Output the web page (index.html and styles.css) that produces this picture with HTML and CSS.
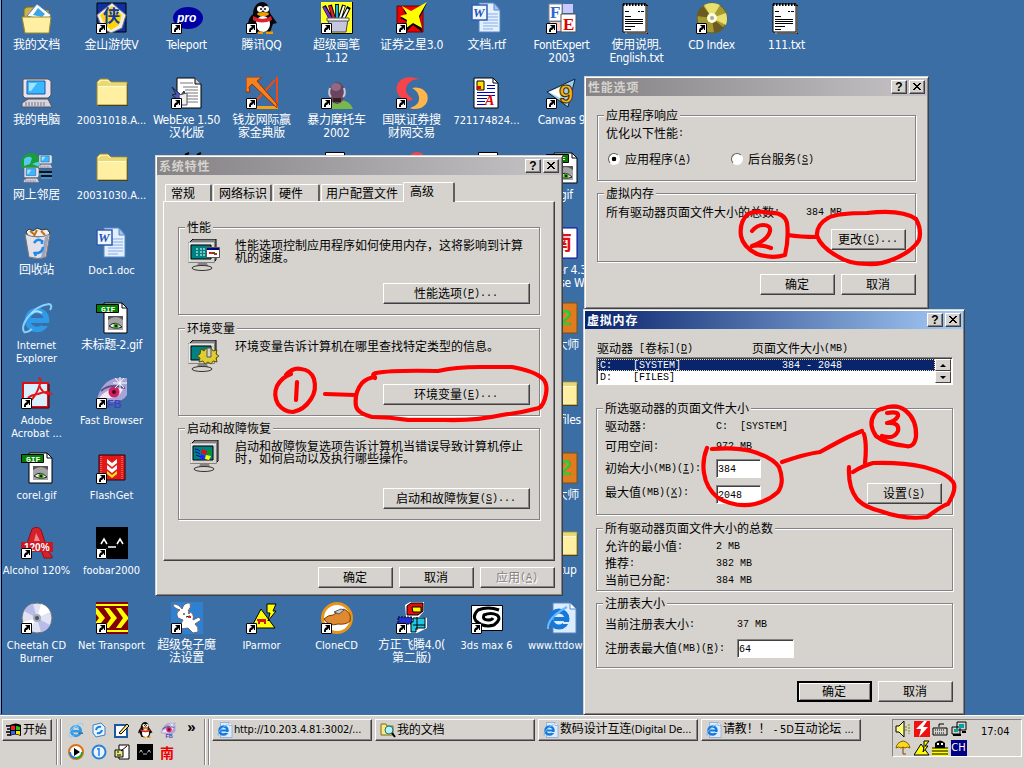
FILE: index.html
```
<!DOCTYPE html>
<html lang="zh-CN">
<head>
    <meta charset="UTF-8">
    <title>系统特性</title>
    <link rel="stylesheet" href="styles.css">
</head>
<body>

    <svg class="defs">
        <defs>
            <symbol id="arrow" viewBox="0 0 11 11">
                <path d="M0 0h11v11H0z" fill="#fff"/><path d="M.5 .5h10v10H.5z" fill="none" stroke="#000"/>
                <path d="M4 2h5v5H8V5L6 7H5v2H3V7l1-2 2-1z" fill="#000"/>
            </symbol>
            <symbol id="folder" viewBox="0 0 32 32">
                <path d="M1 28V5l3-3h8l3 3h16v23z" fill="#ffefa0" stroke="#9c8a31"/>
                <path d="M2 9h28V6H14l-2-2H5L2 7z" fill="#e8d878"/><path d="M2 9.500h28" stroke="#fffbd8"/>
                <path d="M2 28.500h30V7" fill="none" stroke="#4a4118"/>
            </symbol>
            <symbol id="word" viewBox="0 0 32 32">
                <path d="M8 1h15l6 7v22H8z" fill="#e4efff" stroke="#5a86c4"/><path d="M23 1v7h6z" fill="#a5c5f0" stroke="#5a86c4"/>
                <path d="M12 12h15M12 15h15M12 18h15M12 21h15M12 24h15M12 27h10" stroke="#86aee6"/>
                <path d="M1 3h15v15H1z" fill="#f0f6ff" stroke="#2e5cb0" stroke-width="1.500"/>
                <text x="2" y="15" class="serif" font-size="13" font-style="italic" fill="#2456b0">W</text>
            </symbol>
            <symbol id="gif" viewBox="0 0 32 32">
                <path d="M8 1h18l5 5v25H8z" fill="#fff" stroke="#000"/><path d="M26 1v5h5" fill="none" stroke="#000"/>
                <path d="M12 14h15v14H12z" fill="#a5a5a5"/><path d="M12 18q8-6 15 0v-4H12z" fill="#555"/>
                <path d="M13 24q6-6 13 1q-7 3-13-1z" fill="#eee" stroke="#222"/><circle cx="20" cy="24" r="2.500" fill="#3a9a1a"/><circle cx="20" cy="24" r="1" fill="#000"/>
                <path d="M.5 2.500h22v8H.5z" fill="#008200" stroke="#000"/><text x="5" y="9.500" class="mono" font-size="8" fill="#fff">GIF</text>
            </symbol>
            <symbol id="ie" viewBox="0 0 32 32">
                <circle cx="16" cy="18" r="9.500" fill="none" stroke="#2f9be8" stroke-width="5.500"/>
                <path d="M9 16h17v5H9z" fill="#2f9be8"/><path d="M20 21h10v3h-9z" fill="#3b6ea5"/>
                <path d="M3 30C-1 22 12 4 28 2q4 1 1 6M3 30q4 1 8-3" fill="none" stroke="#86d0ff" stroke-width="2"/>
                <path d="M10 12q5-5 11-1" fill="none" stroke="#a8e0ff" stroke-width="2"/>
            </symbol>
            <symbol id="note" viewBox="0 0 32 32">
                <path d="M6 3h21v29H6z" fill="#000"/><path d="M2 2h23v28H2z" fill="#fff" stroke="#000"/><path d="M26 4v27H4" fill="none" stroke="#bbb"/>
                <path d="M2 2.500h24" stroke="#000" stroke-width="3" stroke-dasharray="1.500 1.500"/>
                <path d="M4 9.500h4M17 9.500h2M20 9.500h3M4 14.500h6M4 17.500h18M4 19.500h18M4 21.500h18M4 24.500h10M4 27.500h6" stroke="#000"/>
            </symbol>
            <symbol id="orange" viewBox="0 0 32 32">
                <path d="M1 1h30v30H1z" fill="#e07b20" stroke="#7a5010"/><text x="13" y="23" font-size="22" class="sans" fill="#31c941">2</text>
            </symbol>
            <symbol id="screen" viewBox="0 0 32 32">
                <path d="M2 3l3-3h23v21l-3 3z" fill="#848284" stroke="#000"/>
                <path d="M.5 3.500h26v20H.5z" fill="#d6d3ce" stroke="#848284"/><path d="M1 23V4h25" fill="none" stroke="#fff"/>
                <path d="M3 6h20v14H3z" fill="#008284" stroke="#000"/>
                <path d="M10 24h9l1 3h-11z" fill="#848284"/><ellipse cx="14" cy="29" rx="10" ry="2.500" fill="#d6d3ce" stroke="#333"/>
            </symbol>
            <symbol id="pc" viewBox="0 0 32 32">
                <path d="M2 2h25l3 2v14l-3 3H4l-2-2z" fill="#e7e3ef" stroke="#555"/><path d="M6 4h18v13H6z" fill="#3ab7ff" stroke="#1b5aa0"/>
                <path d="M8 6h8l-6 8H8z" fill="#a0e4ff"/><path d="M7 22h20l4 8H1v-4z" fill="#d6d3e4" stroke="#555"/><path d="M4 26h21M4 28h20" stroke="#777" stroke-dasharray="2 1"/>
            </symbol>
            <symbol id="qq" viewBox="0 0 32 32">
                <path d="M11 2q5-4 10 0 3 4 3 9l7 10-4 1-3 8H9l-4-9-3 2q0-7 5-11 0-6 4-10z" fill="#080808"/>
                <ellipse cx="17" cy="22" rx="7" ry="8" fill="#fff"/><circle cx="14" cy="7" r="3" fill="#fff"/><circle cx="20" cy="7" r="3" fill="#fff"/><circle cx="15" cy="7" r="1"/><circle cx="19" cy="7" r="1"/>
                <ellipse cx="17" cy="12" rx="6" ry="2" fill="#ef9c00"/><path d="M7 14q10 6 18 0l1 4q-10 5-19 0z" fill="#e0202a"/><path d="M12 31h5M20 31h7" stroke="#ef9c00" stroke-width="3"/>
            </symbol>
            <symbol id="foobar" viewBox="0 0 32 32">
                <path d="M0 0h32v32H0z"/><path d="M5 17l3-5 3 5M21 17l3-5 3 5M12 20h8" fill="none" stroke="#fff" stroke-width="1.500"/>
            </symbol>
            <symbol id="fb" viewBox="0 0 32 32">
                <path d="M1 22Q6 4 20 1h11v17q-4 7-15 7z" fill="#a9a4d8"/><path d="M3 21q8-11 24-9-4 10-14 9z" fill="#f4e5f0"/>
                <circle cx="18" cy="15" r="5.500" fill="#d02060"/><circle cx="18" cy="15" r="2" fill="#401020"/><path d="M5 14Q14 6 29 11" fill="none" stroke="#605080" stroke-width="2"/>
                <path d="M24 0v13M17 6h14M19 1l9 10M28 1l-9 10" stroke="#fff"/><text x="11" y="31" font-size="11" class="sans" fill="#4242c0">FB</text>
            </symbol>
            <symbol id="page-ie" viewBox="0 0 32 32">
                <path d="M7 1h17l6 6v24H7z" fill="#dcecff" stroke="#5a86c4"/><path d="M24 1v6h6" fill="#fff" stroke="#5a86c4"/>
                <circle cx="13" cy="17" r="8" fill="none" stroke="#1878d8" stroke-width="5"/><path d="M8 15h14v4H8z" fill="#1878d8"/><path d="M17 20h8v2h-8z" fill="#dcecff"/>
                <path d="M2 27Q1 16 21 5" fill="none" stroke="#68b8ff" stroke-width="2"/>
            </symbol>
            <symbol id="flag" viewBox="0 0 16 14">
                <path d="M0 3h4M1 6h3M0 9h4M1 12h3" stroke="#000" stroke-width="1.500"/><path d="M4 2q6-3 11 0v11q-6-3-11 0z" fill="#000"/>
                <path d="M5 3q2-1 4 0v4H5z" fill="#f02020"/><path d="M10 3q2 0 4 1v3h-4z" fill="#20c020"/><path d="M5 8h4v3q-2 0-4 1z" fill="#3060ff"/><path d="M10 8h4v4q-2-1-4-1z" fill="#ffe000"/>
            </symbol>
        </defs>
    </svg>

    <div class="desktop">
        <div class="item c1 r1">
            <svg viewBox="0 0 32 32"><path d="M3 30V7l3-2h8l3 3h11v22z" fill="#c9b34a" stroke="#7a6a18"/><path d="M6 14L16 2l14 11-4 6z" fill="#fff" stroke="#5580bb"/><path d="M12 13l5-7 7 6-3 3z" fill="#38a5e8"/><path d="M1 15h29l-2 16H4z" fill="#ffefa0" stroke="#9c8a31"/></svg>
            <span>我的文档</span>
        </div>
        <div class="item c2 r1">
            <svg viewBox="0 0 32 32"><path d="M1 1h29v29H1z" fill="#1030a0" stroke="#000"/><path d="M16 1l14 12-4 13-11 5-9-5L1 13z" fill="#eee" stroke="#777"/><path d="M16 4l10 9-3 10-8 5-6-5-5-10z" fill="#ffd700"/><text x="7" y="20" font-size="17" class="cjk" fill="#1038b0">侠</text><use href="#arrow" x="0" y="21" width="11" height="11"/></svg>
            <span>金山游侠V</span>
        </div>
        <div class="item c3 r1">
            <svg viewBox="0 0 32 32"><ellipse cx="17" cy="16" rx="15" ry="11" fill="#0000a5"/><text x="6" y="20" font-size="12" class="sans" font-style="italic" fill="#fff">pro</text><use href="#arrow" x="0" y="21" width="11" height="11"/></svg>
            <span>Teleport</span>
        </div>
        <div class="item c4 r1">
            <svg viewBox="0 0 32 32"><use href="#qq"/><use href="#arrow" x="0" y="21" width="11" height="11"/></svg>
            <span>腾讯QQ</span>
        </div>
        <div class="item c5 r1">
            <svg viewBox="0 0 32 32"><path d="M0 0h32v32H0z" fill="#ffff21"/><path d="M0 31.500h31.500V0" fill="none" stroke="#000"/><path d="M10 17L3 4M13 17L9 3M16 16V2M19 16l4-13M22 17l6-12" stroke="#000" stroke-width="4"/><path d="M10 17L3 5" stroke="#7030d0" stroke-width="2.500"/><path d="M13 17L9 4" stroke="#e02020" stroke-width="2.500"/><path d="M16 16V3" stroke="#20b0e0" stroke-width="2.500"/><path d="M19 16l4-12M22 17l5-10" stroke="#fff" stroke-width="2"/><path d="M7 17h20l-2 13H10z" fill="#c6c6de" stroke="#444"/><path d="M6 16h22v3H6z" fill="#eee" stroke="#555"/><use href="#arrow" x="0" y="21" width="11" height="11"/></svg>
            <span>超级画笔<br>1.12</span>
        </div>
        <div class="item c6 r1">
            <svg viewBox="0 0 32 32"><path d="M1 4h26v26H1z" fill="#ef0000" stroke="#700"/><path d="M7 7l8 5L31 1l-7 14 2 15-9-7-8 8 1-12-6-3 6-3z" fill="#000"/><path d="M6 4l9 5L31 0l-8 14 3 12-9-5-8 6 2-9-7-4 7-2z" fill="#ffff00"/><use href="#arrow" x="0" y="21" width="11" height="11"/></svg>
            <span>证券之星3.0</span>
        </div>
        <div class="item c7 r1"><svg><use href="#word"/></svg><span>文档.rtf</span></div>
        <div class="item c8 r1">
            <svg viewBox="0 0 32 32"><path d="M3 2h13v17H3z" fill="#fff" stroke="#888"/><path d="M17 2h10v9H17z" fill="#c8c8ff"/><path d="M4 20h11v9H4z" fill="#ffc8c8"/><text x="4" y="16" font-size="17" class="serif" fill="#3068d0">F</text><path d="M15 12h15v18H15z" fill="#fff" stroke="#555"/><text x="17" y="28" font-size="17" class="serif" fill="#e00000">E</text><use href="#arrow" x="0" y="21" width="11" height="11"/></svg>
            <span>FontExpert<br>2003</span>
        </div>
        <div class="item c9 r1"><svg><use href="#note"/></svg><span>使用说明.<br>English.txt</span></div>
        <div class="item c10 r1">
            <svg viewBox="0 0 32 32"><circle cx="16" cy="16" r="15" fill="#a59a31" stroke="#6b6318"/><path d="M16 16L8 3q8-4 16 0zM16 16l14 7q2-6 0-12z" fill="#e8e070"/><path d="M16 16L1 14q0-6 6-10zM16 16l2 15q7-1 10-5z" fill="#6b5a21"/><circle cx="16" cy="16" r="5" fill="#ffffd8"/><circle cx="16" cy="16" r="2" fill="#aaa"/><use href="#arrow" x="0" y="21" width="11" height="11"/></svg>
            <span>CD Index</span>
        </div>
        <div class="item c11 r1"><svg><use href="#note"/></svg><span>111.txt</span></div>

        <div class="item c1 r2"><svg><use href="#pc"/></svg><span>我的电脑</span></div>
        <div class="item c2 r2"><svg><use href="#folder"/></svg><span class="latin">20031018.A...</span></div>
        <div class="item c3 r2">
            <svg viewBox="0 0 32 32"><path d="M6 1h18l6 6v24H6z" fill="#fff" stroke="#000"/><path d="M24 1v6h6" fill="#ccc" stroke="#000"/><path d="M9 6h13M12 10h15M14 13h13M16 16h11M16 19h11M16 22h11M16 25h11" stroke="#777"/><path d="M1 10l9 8 3-4 2 7-8 2-6-5 4-1z" fill="#4a55c0" stroke="#223"/><path d="M8 18l8-2v12H9z" fill="#eee" stroke="#555"/><use href="#arrow" x="0" y="21" width="11" height="11"/></svg>
            <span>WebExe 1.50<br>汉化版</span>
        </div>
        <div class="item c4 r2">
            <svg viewBox="0 0 32 32"><path d="M31 0v32M29 3L10 24" fill="none" stroke="#ef4a10" stroke-width="2"/><path d="M8 30.500h24" stroke="#f9a010" stroke-width="3"/><path d="M0 0h16l-5 4 20 23v4L6 7l-3 3 1 5H0z" fill="#f58220" stroke="#9c3000"/><use href="#arrow" x="0" y="21" width="11" height="11"/></svg>
            <span>钱龙网际赢<br>家金典版</span>
        </div>
        <div class="item c5 r2">
            <svg viewBox="0 0 32 32"><path d="M8 32q2-9 10-9 11 0 14 9z" fill="#78b848"/><ellipse cx="16" cy="16" rx="8" ry="11" fill="#6a4460"/><ellipse cx="15" cy="10" rx="5" ry="4" fill="#8f6a80"/><path d="M9 11q-2 6 1 9M23 11q2 6-1 9" fill="none" stroke="#c8c8d8" stroke-width="2"/><path d="M12 21h8v4h-8z" fill="#322"/><use href="#arrow" x="0" y="21" width="11" height="11"/></svg>
            <span>暴力摩托车<br>2002</span>
        </div>
        <div class="item c6 r2">
            <svg viewBox="0 0 32 32"><path d="M24 2Q8-3 2 6q-5 10 6 17 8 2 9-1Q6 15 12 7q4-5 12-5z" fill="#f7434a"/><path d="M16 11q10-2 15 6 3 9-6 14-8 2-11 0 10-3 9-11-1-6-7-9z" fill="#ffb54a"/><use href="#arrow" x="0" y="21" width="11" height="11"/></svg>
            <span>国联证券搜<br>财网交易</span>
        </div>
        <div class="item c7 r2">
            <svg viewBox="0 0 32 32"><path d="M3 1h19l5 5v25H3z" fill="#fff" stroke="#000"/><path d="M22 1v5h5" fill="none" stroke="#000"/><path d="M6 4h7v9H6z" fill="#ffe000" stroke="#000"/><path d="M6 9h4v3H6z" fill="#d00"/><path d="M16 8.500h8M16 11.500h8M6 15.500h18M6 18.500h18M6 21.500h10M6 24.500h8M6 27.500h8" stroke="#0000c0"/><text x="14" y="28" font-size="14" class="serif" font-style="italic" fill="#e00000">A</text></svg>
            <span class="latin">721174824...</span>
        </div>
        <div class="item c8 r2">
            <svg viewBox="0 0 32 32"><path d="M1 15L29 2l-7 28z" fill="#9fd0f0" stroke="#123"/><path d="M3 15l14-6-3 12z" fill="#fff"/><text x="13" y="26" font-size="26" class="sans" fill="#f0b020" stroke="#402800">9</text><use href="#arrow" x="0" y="21" width="11" height="11"/></svg>
            <span>Canvas 9</span>
        </div>

        <div class="item c1 r3">
            <svg viewBox="0 0 32 32"><circle cx="10" cy="11" r="10" fill="#18a038"/><path d="M3 7q4-4 8-1l-2 6-6 2zM11 12l8-3v6z" fill="#58c8f0"/><use href="#pc" x="17" y="1" width="15" height="17"/><path d="M18 20h13M20 24h11" stroke="#111" stroke-width="2"/><path d="M18 22h13M20 26h11" stroke="#48b0e8"/><use href="#pc" x="2" y="14" width="17" height="18"/></svg>
            <span>网上邻居</span>
        </div>
        <div class="item c2 r3"><svg><use href="#folder"/></svg><span class="latin">20031030.A...</span></div>
        <div class="item c3 r3"><svg viewBox="0 0 32 32"><path d="M14 3l4-2M26 3l4-2" stroke="#000" stroke-width="2"/></svg></div>
        <div class="item c5 r3"><svg viewBox="0 0 32 32"><path d="M4.500 .500h19V30h-19z" fill="#fff" stroke="#000"/></svg></div>
        <div class="item c6 r3"><svg viewBox="0 0 32 32"><path d="M15 2q6-4 12 0v3H15z" fill="#f7434a"/></svg></div>
        <div class="item c7 r3"><svg viewBox="0 0 32 32"><path d="M7.500 .500h19V30h-19z" fill="#fff" stroke="#000"/></svg></div>
        <div class="item c8 r3"><svg><use href="#gif"/></svg><span>1.gif</span></div>

        <div class="item c1 r4">
            <svg viewBox="0 0 32 32"><path d="M5 5l3-3 4 2 4-3 5 2 5-1 3 4-3 4H8z" fill="#eee" stroke="#333"/><path d="M9 4l5 4M16 3l-3 6M20 4l4 4" stroke="#c07010" stroke-width="2"/><path d="M4 7q13 6 25 0l-4 23q-8 3-17 0z" fill="#e3e0ea" stroke="#777"/><path d="M24 10l4-2-4 22-4 1z" fill="#a5a2b5"/><path d="M13 16q4-6 9-1M21 13v4M22 20q-1 7-8 6M15 29l-2-4" fill="none" stroke="#1b8ae8" stroke-width="2.500"/></svg>
            <span>回收站</span>
        </div>
        <div class="item c2 r4"><svg><use href="#word"/></svg><span class="latin">Doc1.doc</span></div>
        <div class="item c8 r4">
            <svg viewBox="0 0 32 32"><path d="M1 1h30v30H1z" fill="#fff" stroke="#00a"/><text x="6" y="23" font-size="20" class="cjk" fill="#e01010">南</text></svg>
            <span>Maker 4.3<br>House W</span>
        </div>

        <div class="item c1 r5"><svg><use href="#ie"/></svg><span class="latin">Internet<br>Explorer</span></div>
        <div class="item c2 r5"><svg><use href="#gif"/></svg><span>未标题-2.gif</span></div>
        <div class="item c8 r5"><svg><use href="#orange"/></svg><span>大大师</span></div>

        <div class="item c1 r6">
            <svg viewBox="0 0 32 32"><path d="M2 6h25v24H2z" fill="#d8efff" stroke="#e01010" stroke-width="2"/><path d="M28 7v24H3" fill="none" stroke="#400"/><path d="M17 1q4 0 2 6Q15 20 8 25M18 8q4 10 12 9-3-4-13 0-7 1-10 4" fill="none" stroke="#e01818" stroke-width="2"/><use href="#arrow" x="0" y="21" width="11" height="11"/></svg>
            <span class="latin">Adobe<br>Acrobat ...</span>
        </div>
        <div class="item c2 r6"><svg viewBox="0 0 32 32"><use href="#fb"/><use href="#arrow" x="0" y="21" width="11" height="11"/></svg><span class="latin">Fast Browser</span></div>
        <div class="item c8 r6"><svg><use href="#folder"/></svg><span>My files</span></div>

        <div class="item c1 r7"><svg><use href="#gif"/></svg><span class="latin">corel.gif</span></div>
        <div class="item c2 r7">
            <svg viewBox="0 0 32 32"><path d="M3 3h26v25H3z" fill="#e01818" stroke="#300"/><path d="M5 4v23M26 4v23" stroke="#ff9090" stroke-dasharray="1 1"/><path d="M11 7l5 4 5-4v4l-5 4-5-4zM11 13l5 4 5-4v4l-5 4-5-4z" fill="#fff"/><path d="M11 19l5 4 5-4v3l-5 4-5-4z" fill="#ffde21"/><use href="#arrow" x="0" y="21" width="11" height="11"/></svg>
            <span class="latin">FlashGet</span>
        </div>
        <div class="item c8 r7"><svg><use href="#orange"/></svg><span>大大师</span></div>

        <div class="item c1 r8">
            <svg viewBox="0 0 32 32"><path d="M11 2q6-4 9 1l7 21 4 5v2h-8l-5-14h-4L7 28H2z" fill="#d6202a" stroke="#8c1018"/><path d="M15 6l4 8h-6z" fill="#f48a90"/><path d="M0 15h32v10H0z" fill="#c81822"/><text x="3" y="24" font-size="10" class="sans" fill="#fff">120%</text><use href="#arrow" x="0" y="21" width="11" height="11"/></svg>
            <span class="latin">Alcohol 120%</span>
        </div>
        <div class="item c2 r8"><svg viewBox="0 0 32 32"><use href="#foobar"/><use href="#arrow" x="0" y="21" width="11" height="11"/></svg><span class="latin">foobar2000</span></div>
        <div class="item c8 r8"><svg><use href="#folder"/></svg><span>Setup</span></div>

        <div class="item c1 r9">
            <svg viewBox="0 0 32 32"><circle cx="16" cy="16" r="15" fill="#dfe3f4" stroke="#777"/><path d="M16 16L3 9q4-7 9-7zM16 16l13 7q-3 6-9 7z" fill="#b9bce8"/><path d="M16 16L20 2q7 2 9 8zM16 16L8 28q-5-3-6-8z" fill="#fff"/><circle cx="16" cy="16" r="4" fill="#a5aab8"/><circle cx="16" cy="16" r="2" fill="#456"/><use href="#arrow" x="0" y="21" width="11" height="11"/></svg>
            <span class="latin">Cheetah CD<br>Burner</span>
        </div>
        <div class="item c2 r9">
            <svg viewBox="0 0 32 32"><path d="M0 0h32v32H0z" fill="#840000"/><path d="M0 3h32M0 29h32" stroke="#ffff00" stroke-width="2"/><path d="M0 6h1l8 10-8 10H0v-6l3-4-3-4zM8 6h5l8 10-8 10H8l7-10zM20 6h5l7 9v2l-7 9h-5l7-10z" fill="#ffff00"/><use href="#arrow" x="0" y="21" width="11" height="11"/></svg>
            <span class="latin">Net Transport</span>
        </div>
        <div class="item c3 r9">
            <svg viewBox="0 0 32 32"><path d="M0 0h32v32H0z" fill="#3080d0"/><path d="M2 2q6 0 9 5 2-7 8-6 2 4-2 8 7 2 5 9l6-3 2 3-6 4q4 3 3 8l-5 1-5-5-7 1q-1-6 2-9l-5-2q-3-6 2-8Q2 6 2 2z" fill="#fff" stroke="#667"/><path d="M12 12h2M17 11h2M15 15l4-1" stroke="#000"/><path d="M17 15h3" stroke="#e02020" stroke-width="2"/><use href="#arrow" x="0" y="21" width="11" height="11"/></svg>
            <span>超级兔子魔<br>法设置</span>
        </div>
        <div class="item c4 r9">
            <svg viewBox="0 0 32 32"><path d="M15 7l14 19H5z" fill="#ffff00" stroke="#000"/><path d="M21 2h9l-3 7h3l-8 10 2-8h-3z" fill="#ffff00" stroke="#000"/><path d="M11 17h9v5h-2v-2h-4v2h-2v-3h-1z" fill="#d01818"/><use href="#arrow" x="0" y="21" width="11" height="11"/></svg>
            <span class="latin">IParmor</span>
        </div>
        <div class="item c5 r9">
            <svg viewBox="0 0 32 32"><circle cx="16" cy="16" r="14.500" fill="#fff" stroke="#e79418" stroke-width="3"/><path d="M3 17q4-4 9-4l5-3 6-3q8 4 6 12-4 4-12 3-9 3-14-5z" fill="#e08a30" stroke="#7a3c08"/><path d="M13 10l7-3 3 1-5 4z" fill="#ccc" stroke="#555"/><use href="#arrow" x="0" y="21" width="11" height="11"/></svg>
            <span class="latin">CloneCD</span>
        </div>
        <div class="item c6 r9">
            <svg viewBox="0 0 32 32"><path d="M9 3l5-3h14v9l-5 6 8 1v10l-10 5H6V15h4z" fill="#fff"/><path d="M11 4l4-3h12v8l-5 4H11z" fill="#e01010" stroke="#000"/><path d="M16 5h9v5h-8z" fill="#ffff00" stroke="#000"/><path d="M2 15h14v7H2z" fill="#2030d0" stroke="#000" stroke-dasharray="2 1"/><path d="M17 16h12v10h-9v4h-5V20h2zM21 15v13M17 23h12" fill="#20c8e8" stroke="#000"/><use href="#arrow" x="0" y="21" width="11" height="11"/></svg>
            <span>方正飞腾4.0(<br>第二版)</span>
        </div>
        <div class="item c7 r9">
            <svg viewBox="0 0 32 32"><path d="M.5 3.500h31v25H.5z" fill="#fff" stroke="#000"/><path d="M28 8Q17 4 7 8q-6 6-2 11 8 7 18 4 8-6 3-10-6-3-13 0-2 5 4 5 4 0 5-2" fill="none" stroke="#000" stroke-width="3"/><use href="#arrow" x="0" y="21" width="11" height="11"/></svg>
            <span class="latin">3ds max 6</span>
        </div>
        <div class="item c8 r9"><svg><use href="#page-ie"/></svg><span class="latin">www.ttdown..</span></div>
    </div>

    <!-- System properties -->
    <div class="window system">
        <div class="title"><b>系统特性</b><i class="cap">?</i><i class="cap close"></i></div>
        <div class="tabs">
            <span class="tab">常规</span><span class="tab wide">网络标识</span><span class="tab">硬件</span><span class="tab profile">用户配置文件</span><span class="tab active">高级</span>
        </div>
        <div class="panel">
            <fieldset>
                <legend>性能</legend>
                <div class="info">
                    <svg viewBox="0 0 32 32"><use href="#screen"/><path d="M8 10h3M8 13h3M8 16h3M12 10h6M12 13h6M12 16h6" stroke="#fff" stroke-dasharray="2 1"/><path d="M18.500 8.500h13v10h-13z" fill="#fff" stroke="#555"/><path d="M19 10h12" stroke="#000084" stroke-width="2"/><path d="M21 14h4M26 15h3" stroke="#d02020" stroke-width="2"/><path d="M25 14h2" stroke="#008200" stroke-width="2"/></svg>
                    <p>性能选项控制应用程序如何使用内存，这将影响到计算机的速度。</p>
                </div>
                <button class="long">性能选项<em>(<u>P</u>)...</em></button>
            </fieldset>
            <fieldset>
                <legend>环境变量</legend>
                <div class="info">
                    <svg viewBox="0 0 32 32"><use href="#screen"/><path d="M13 9l3 2 2-3 3 2 2-2 2 3 4-1-1 4 3 2-3 2 1 4-4-1-2 3-3-2-3 2-2-3-4 1 1-4-3-2 3-2z" fill="#dece31" stroke="#5a5200"/><path d="M19 8h4v9h-4z" fill="#d6d3ce" stroke="#555"/></svg>
                    <p>环境变量告诉计算机在哪里查找特定类型的信息。</p>
                </div>
                <button class="long">环境变量<em>(<u>E</u>)...</em></button>
            </fieldset>
            <fieldset class="tall">
                <legend>启动和故障恢复</legend>
                <div class="info">
                    <svg viewBox="-2 0 32 32"><use href="#screen" width="32" height="32"/><path d="M5 9q3 0 5 2M5 12q3 0 5 2M6 15l5 2" stroke="#0000c0" fill="none"/><path d="M12 9l5 2-1 4-5-2z" fill="#e01010"/><path d="M18 10l4 1-1 4-4-1z" fill="#00a000"/><path d="M11 14l4 2-1 4-4-2z" fill="#2020ff"/><path d="M16 15l5 1-2 4-4-1z" fill="#ffff00"/></svg>
                    <p>启动和故障恢复选项告诉计算机当错误导致计算机停止时，如何启动以及执行哪些操作。</p>
                </div>
                <button class="long">启动和故障恢复<em>(<u>S</u>)...</em></button>
            </fieldset>
        </div>
        <div class="buttons"><button>确定</button><button>取消</button><button disabled>应用<em>(<u>A</u>)</em></button></div>
    </div>

    <!-- Performance options -->
    <div class="window perf">
        <div class="title"><b>性能选项</b><i class="cap">?</i><i class="cap close"></i></div>
        <div class="body">
            <fieldset class="response">
                <legend>应用程序响应</legend>
                <p>优化以下性能<em>:</em></p>
                <div class="radios">
                    <label><i class="radio on"></i>应用程序<em>(<u>A</u>)</em></label>
                    <label><i class="radio"></i>后台服务<em>(<u>S</u>)</em></label>
                </div>
            </fieldset>
            <fieldset class="memory">
                <legend>虚拟内存</legend>
                <div class="row"><span>所有驱动器页面文件大小的总数<em>:</em></span><em>384 MB</em></div>
                <button>更改<em>(<u>C</u>)...</em></button>
            </fieldset>
            <div class="buttons"><button>确定</button><button>取消</button></div>
        </div>
    </div>

    <!-- Virtual memory -->
    <div class="window vm">
        <div class="title"><b>虚拟内存</b><i class="cap">?</i><i class="cap close"></i></div>
        <div class="body">
            <div class="heads"><span>驱动器<em> [</em>卷标<em>](<u>D</u>)</em></span><span>页面文件大小<em>(MB)</em></span></div>
            <div class="list">
                <div class="rows">
                    <div class="drive selected"><em>C:</em><em>[SYSTEM]</em><em>384 - 2048</em></div>
                    <div class="drive"><em>D:</em><em>[FILES]</em></div>
                </div>
                <div class="scroll"><i class="up"></i><i class="down"></i></div>
            </div>
            <fieldset class="selected-drive">
                <legend>所选驱动器的页面文件大小</legend>
                <div class="row"><span>驱动器<em>:</em></span><em>C:&nbsp; [SYSTEM]</em></div>
                <div class="row free"><span>可用空间<em>:</em></span><em>972 MB</em></div>
                <div class="row initial"><span>初始大小<em>(MB)(<u>I</u>):</em></span><input type="text" value="384"></div>
                <div class="row max"><span>最大值<em>(MB)(<u>X</u>):</em></span><input type="text" value="2048"><button>设置<em>(<u>S</u>)</em></button></div>
            </fieldset>
            <fieldset class="totals">
                <legend>所有驱动器页面文件大小的总数</legend>
                <div class="row"><span>允许的最小值<em>:</em></span><em>2 MB</em></div>
                <div class="row"><span>推荐<em>:</em></span><em>382 MB</em></div>
                <div class="row"><span>当前已分配<em>:</em></span><em>384 MB</em></div>
            </fieldset>
            <fieldset class="registry">
                <legend>注册表大小</legend>
                <div class="row"><span>当前注册表大小<em>:</em></span><em>37 MB</em></div>
                <div class="row size"><span>注册表最大值<em>(MB)(<u>R</u>):</em></span><input type="text" value="64"></div>
            </fieldset>
            <div class="buttons"><button class="default">确定</button><button>取消</button></div>
        </div>
    </div>

    <div class="taskbar">
        <button class="start"><svg><use href="#flag"/></svg><span>开始</span></button>
        <i class="sep"></i>
        <div class="quick">
            <svg><use href="#ie"/></svg>
            <svg viewBox="0 0 16 16"><path d="M2 3l8-2 4 4v8l-9 2-3-4z" fill="#e8f3ff" stroke="#4080c0"/><path d="M5 8q1-4 5-3M11 8q-1 4-5 3" fill="none" stroke="#1880e0" stroke-width="2"/></svg>
            <svg viewBox="0 0 16 16"><path d="M1 3h12v12H1z" fill="#fff" stroke="#1b5aa0" stroke-width="2"/><path d="M5 11l8-9 2 2-8 8z" fill="#ffe070" stroke="#000"/></svg>
            <svg><use href="#qq"/></svg>
            <svg><use href="#fb"/></svg>
            <svg viewBox="0 0 16 16"><circle cx="8" cy="8" r="7" fill="#fff" stroke="#e07010" stroke-width="2"/><path d="M2 8a6 6 0 0 0 6 6" fill="none" stroke="#2080e0" stroke-width="2"/><path d="M14 8a6 6 0 0 1-6 6" fill="none" stroke="#30a030" stroke-width="2"/><path d="M6 4l6 4-6 4z"/></svg>
            <svg viewBox="0 0 16 16"><circle cx="8" cy="8" r="6.500" fill="#e8f4ff" stroke="#2a80d8" stroke-width="2"/><path d="M8 4v8M6 5h2" stroke="#2a80d8" stroke-width="1.500" fill="none"/></svg>
            <svg viewBox="0 0 16 16"><path d="M5 1h10v14H5z" fill="#fff" stroke="#000"/><path d="M1 6h8v7H1z" fill="#e8e880" stroke="#000"/><path d="M3 8h2M3 11h4M7 7l6-5" stroke="#000"/></svg>
            <svg><use href="#foobar"/></svg>
            <span class="nan">南</span>
        </div>
        <span class="more">»</span>
        <i class="sep"></i>
        <div class="tasks">
            <button><svg><use href="#page-ie"/></svg><span>http://10.203.4.81:3002/...</span></button>
            <button><svg viewBox="0 0 16 16"><path d="M1 2h5l1 2h6v9H1z" fill="#ffe880" stroke="#7a6a18"/><circle cx="9" cy="8" r="4" fill="#b8f0f8" stroke="#107878"/><path d="M12 11l3 4" stroke="#000" stroke-width="2"/></svg><span class="zh">我的文档</span></button>
            <button><svg><use href="#page-ie"/></svg><span class="zh">数码设计互连<small>(Digital De...</small></span></button>
            <button><svg><use href="#page-ie"/></svg><span class="zh">请教！！ <small>- 5D</small>互动论坛 <small>...</small></span></button>
        </div>
        <div class="tray">
            <div class="tray-icons">
                <svg viewBox="0 0 16 16"><path d="M1 5h3l5-5v16l-5-5H1z" fill="#ffff80" stroke="#000"/><path d="M11 5v6M14 3v10" stroke="#848200" stroke-dasharray="2 1"/></svg>
                <svg viewBox="0 0 16 16"><path d="M0 0h16v16H0z" fill="#f01010"/><path d="M10 0L2 8h5l-2 8 9-10H9l4-6z" fill="#fff"/></svg>
                <svg viewBox="0 0 16 16"><path d="M1 7h14v7H1z" fill="#d6d3ce" stroke="#000"/><path d="M3 9h10M3 12h10" stroke="#000" stroke-dasharray="1 1"/><path d="M7 6V3h5" fill="none" stroke="#000"/></svg>
                <svg viewBox="0 0 16 16"><path d="M6 1h9v8H6zM1 6h8v7H1z" fill="#d6d3ce" stroke="#000"/><path d="M8 3h5v4H8zM3 8h4v3H3z" fill="#00a5a5"/><path d="M2 14h8M11 11h4" stroke="#000" stroke-width="2"/></svg>
                <svg viewBox="0 0 16 16"><path d="M1 8q1-6 7-7 6 1 7 7-3-2-5 0-2-2-4 0-2-2-5 0z" fill="#ffd818" stroke="#806000"/><path d="M8 7v7h3" fill="none" stroke="#804000"/></svg>
                <svg viewBox="0 0 16 16"><path d="M7 4l8 11H0z" fill="#ffff00" stroke="#000"/><path d="M10 1h5l-4 5h3l-5 6 1-5z" fill="#ffff00" stroke="#000"/></svg>
                <svg viewBox="0 0 16 16"><path d="M3 8V3q5-5 10 0v5z"/><path d="M5 4h2M9 4h2" stroke="#fff" stroke-width="2"/><path d="M0 8h16v8H0z" fill="#ffff00"/><path d="M0 8h16M0 11h16M0 14h16" stroke="#000"/></svg>
                <span class="ime">CH</span>
            </div>
            <span class="clock">17:04</span>
        </div>
    </div>

    <!-- Hand-drawn step marks -->
    <svg class="marks" viewBox="0 0 1024 768">
        <path d="M286 375Q293 367 301 369 311 370 314 379 317 390 311 399 304 410 293 412 284 412 278 404 273 395 277 386 282 377 291 374M297 382L296 400M325 394L355 395"/>
        <path d="M375 378Q371 374 376 373 392 370 438 371 455 367 480 367H512Q534 371 542 378 548 383 546 394 544 405 539 408 520 413 502 415 475 421 445 420H408Q390 417 372 417 357 413 356 406 354 393 362 383 367 378 375 377"/>
        <path d="M748 214Q757 210 770 213 784 212 787 223 789 238 785 255 772 259 757 254 743 247 741 236 739 222 748 214M752 231Q757 225 763 225 771 225 770 231 768 240 752 246 760 244 771 248M788 235Q800 237 817 237"/>
        <path d="M828 218Q837 213 867 213 902 209 916 219 922 230 919 240 913 251 894 259 880 265 867 264 849 264 837 256 821 247 817 236 816 225 828 218"/>
        <path d="M882 409Q896 403 906 411 917 420 916 437 914 448 906 446 886 444 876 436 868 424 874 415 877 409 885 408M887 413Q899 411 898 416 896 421 887 423 900 422 898 431 894 440 882 436"/>
        <path d="M712 449Q735 447 751 451 772 457 779 467 785 482 778 492 768 501 755 504 736 508 718 498 706 488 704 473 702 460 707 448"/>
        <path d="M782 462Q805 454 820 452 838 442 848 437L862 431M864 434Q867 444 865 463M849 467Q848 488 857 499 864 507 880 511 905 520 927 517 943 505 948 504 956 491 954 484 950 474 924 467 901 462 873 463 862 466 853 472"/>
    </svg>

</body>
</html>
```
FILE: styles.css
```
* {
    box-sizing: border-box;
}
body {
    margin: 0;
    width: 1024px;
    height: 768px;
    overflow: hidden;
    position: relative;
    background: #3b6ea5;
    font: 12px/12px "Noto Sans CJK SC", sans-serif;
    color: #000;
    cursor: default;
}
p {
    margin: 0;
}
/* half-width characters take exactly half a hanzi */
em {
    display: inline-block;
    height: 12px;
    font: 10px/12px "Liberation Mono", monospace;
    white-space: pre;
    vertical-align: top;
    transform: translateY(1px) scaleY(1.18);
}
.defs {
    position: absolute;
    width: 0;
    height: 0;
}
.serif {
    font-family: "Liberation Serif", serif;
    font-weight: bold;
}
.sans {
    font-family: "Liberation Sans", sans-serif;
    font-weight: bold;
}
.mono {
    font-family: "Liberation Mono", monospace;
    font-weight: bold;
}
.cjk {
    font-family: "Noto Sans CJK SC", sans-serif;
    font-weight: bold;
}

/* desktop */
.desktop {
    display: grid;
    grid-template-columns: repeat(11, 75px);
    grid-template-rows: repeat(9, 75px);
    height: 714px;
    padding-top: 2px;
    border-left: 1px solid #7ba2e7;
    box-shadow: inset 1px 0 #000;
}
.item {
    display: flex;
    flex-direction: column;
    align-items: center;
    margin: 0 2px 0 -2px;
    color: #fff;
    text-align: center;
    white-space: nowrap;
    font: 12px/13px "DejaVu Sans Condensed", "Noto Sans CJK SC", sans-serif;
}
.item svg {
    width: 32px;
    height: 32px;
    flex: none;
    margin-bottom: 5px;
}
.item span {
    letter-spacing: -0.3px;
}
.item .latin {
    font-size: 11px;
    letter-spacing: 0;
}
.c1 { grid-column: 1; }
.c2 { grid-column: 2; }
.c3 { grid-column: 3; }
.c4 { grid-column: 4; }
.c5 { grid-column: 5; }
.c6 { grid-column: 6; }
.c7 { grid-column: 7; }
.c8 { grid-column: 8; }
.c9 { grid-column: 9; }
.c10 { grid-column: 10; }
.c11 { grid-column: 11; }
.r1 { grid-row: 1; }
.r2 { grid-row: 2; }
.r3 { grid-row: 3; }
.r4 { grid-row: 4; }
.r5 { grid-row: 5; }
.r6 { grid-row: 6; }
.r7 { grid-row: 7; }
.r8 { grid-row: 8; }
.r9 { grid-row: 9; }

/* windows */
.window {
    position: absolute;
    background: #d6d3ce;
    border: 1px solid;
    border-color: #d6d3ce #404040 #404040 #d6d3ce;
    box-shadow: inset 1px 1px #fff, inset -1px -1px #848284;
    padding: 1px;
}
.system {
    left: 155px;
    top: 155px;
    width: 408px;
    height: 441px;
}
.perf {
    left: 584px;
    top: 76px;
    width: 345px;
    height: 233px;
}
.vm {
    left: 583px;
    top: 309px;
    width: 382px;
    height: 406px;
}
.title {
    display: flex;
    align-items: center;
    height: 18px;
    padding: 0 2px;
    background: linear-gradient(90deg, #848284, #c6c3c6);
    color: #d6d3ce;
}
.title b {
    flex: 1;
    letter-spacing: 0.8px;
}
.vm .title {
    background: linear-gradient(90deg, #08246b, #a5cbf7);
    color: #fff;
}
.cap {
    width: 16px;
    height: 14px;
    background: #d6d3ce;
    border: 1px solid;
    border-color: #fff #404040 #404040 #fff;
    box-shadow: inset -1px -1px #848284;
    color: #000;
    font: bold 12px/12px "Liberation Sans", sans-serif;
    text-align: center;
}
.close {
    margin-left: 2px;
    background: linear-gradient(45deg, transparent 43%, #000 43%, #000 57%, transparent 57%) 3px 2px / 8px 7px no-repeat,
        linear-gradient(-45deg, transparent 43%, #000 43%, #000 57%, transparent 57%) 3px 2px / 8px 7px no-repeat, #d6d3ce;
}
.body {
    padding: 13px 11px 0;
}
.vm .body {
    padding-right: 10px;
}
fieldset {
    margin: 0;
    padding: 0 9px 0 8px;
    min-width: 0;
    border: 1px solid #848284;
    box-shadow: 1px 1px #fff, inset 1px 1px #fff;
}
legend {
    margin-left: -2px;
    padding: 0 2px;
    height: 12px;
    background: #d6d3ce;
}
button {
    display: block;
    width: 75px;
    height: 21px;
    padding: 0 1px 1px 0;
    background: #d6d3ce;
    border: 1px solid;
    border-color: #fff #404040 #404040 #fff;
    box-shadow: inset -1px -1px #848284;
    font: inherit;
    color: #000;
    white-space: nowrap;
}
button:disabled {
    color: #848284;
    text-shadow: 1px 1px #fff;
}
.default {
    border: 2px solid #000;
    box-shadow: inset 1px 1px #fff, inset -1px -1px #848284;
}
.buttons {
    display: flex;
    justify-content: flex-end;
    gap: 6px;
}
input {
    width: 45px;
    height: 19px;
    padding: 1px 1px 0;
    border: 1px solid;
    border-color: #848284 #fff #fff #848284;
    box-shadow: inset 1px 1px #404040;
    background: #fff;
    font: 10px "Liberation Mono", monospace;
}

/* system properties */
.tabs {
    display: flex;
    align-items: flex-end;
    height: 26px;
    padding-left: 8px;
}
.tab {
    width: 47px;
    height: 17px;
    margin-right: 1px;
    padding: 2px 0 0 5px;
    border: solid;
    border-width: 1px 2px 0 1px;
    border-color: #fff #606060 #fff #fff;
    border-radius: 2px 2px 0 0;
    white-space: nowrap;
}
.tab.wide {
    width: 59px;
    padding-left: 5px;
}
.tab.profile {
    width: 82px;
    margin: 0;
    padding-left: 4px;
    border-right: 0;
}
.tab.active {
    width: 52px;
    height: 20px;
    padding-left: 6px;
    margin-bottom: -1px;
    background: #d6d3ce;
    z-index: 1;
}
.panel {
    width: 392px;
    height: 360px;
    margin-left: 6px;
    padding: 19px 14px 0;
    border: 1px solid;
    border-color: #fff #404040 #404040 #fff;
    box-shadow: inset -1px -1px #848284;
}
.panel fieldset {
    height: 94px;
    margin-bottom: 7px;
}
.panel .tall {
    height: 98px;
    margin-top: -1px;
}
.info {
    display: flex;
    gap: 15px;
    height: 44px;
    padding: 6px 0 0 1px;
}
.info p {
    width: 295px;
}
.info svg {
    width: 32px;
    height: 32px;
    flex: none;
}
.long {
    width: 147px;
    margin: 6px 0 0 auto;
}
.tall .long {
    margin-top: 10px;
}
.system .buttons {
    padding: 6px 6px 0;
}

/* performance options */
.response {
    height: 72px;
}
.response p {
    margin: 6px 0 14px;
}
.radios {
    display: flex;
    padding-left: 2px;
}
.radios label {
    display: flex;
    width: 123px;
}
.radio {
    width: 12px;
    height: 12px;
    margin-right: 5px;
    border: 1px solid;
    border-color: #606060 #fff #fff #606060;
    border-radius: 50%;
    background: #fff;
}
.radio.on {
    background: radial-gradient(circle, #000 2px, #fff 2.6px);
}
.memory {
    height: 75px;
    margin-top: 6px;
}
.memory .row {
    margin: 7px 0 11px;
}
.row {
    display: flex;
    height: 12px;
}
.row span {
    width: 111px;
    white-space: nowrap;
}
.memory .row span {
    width: 200px;
}
.memory button {
    margin-left: auto;
}
.perf .buttons {
    margin-top: 12px;
}

/* virtual memory */
.heads {
    display: flex;
    height: 12px;
    padding-left: 1px;
}
.heads span {
    width: 155px;
}
.list {
    display: flex;
    height: 28px;
    margin-top: 3px;
    padding: 1px;
    background: #fff;
    border: 1px solid;
    border-color: #848284 #fff #fff #848284;
    box-shadow: inset 1px 1px #404040;
}
.rows {
    flex: 1;
}
.drive {
    display: grid;
    grid-template-columns: 33px 149px 1fr;
    height: 12px;
    padding-left: 2px;
}
.drive em {
    justify-self: start;
}
.drive.selected {
    background: #08246b;
    color: #fff;
    outline: 1px dotted #f7db94;
    outline-offset: -1px;
}
.scroll {
    width: 16px;
}
.scroll i {
    display: grid;
    place-items: center;
    height: 12px;
    background: #d6d3ce;
    border: 1px solid;
    border-color: #fff #404040 #404040 #fff;
}
.scroll i::after {
    content: "";
    border: 3px solid transparent;
    border-top: 0;
    border-bottom-color: #000;
}
.scroll .down::after {
    transform: rotate(180deg);
}
.selected-drive {
    height: 113px;
    margin-top: 17px;
    padding-top: 6px;
}
.free {
    margin-top: 8px;
}
.initial {
    height: 19px;
    margin-top: 7px;
}
.initial span {
    padding-top: 3px;
}
.max {
    height: 21px;
    margin-top: 5px;
}
.max span {
    padding-top: 3px;
}
.max input {
    margin-top: 2px;
}
.max button {
    margin: 0 1px 0 auto;
}
.totals {
    height: 69px;
    margin-top: 7px;
    padding-top: 6px;
}
.totals .row {
    margin-bottom: 5px;
}
.registry {
    height: 71px;
    margin-top: 6px;
    padding-top: 9px;
}
.registry span {
    width: 132px;
}
.registry .size {
    height: 19px;
    margin-top: 9px;
}
.size span {
    padding-top: 3px;
}
.size input {
    width: 57px;
}
.vm .buttons {
    margin-top: 13px;
}

/* taskbar */
.taskbar {
    position: absolute;
    left: 0;
    top: 715px;
    width: 1024px;
    height: 53px;
    display: flex;
    align-items: flex-start;
    padding: 3px 2px 0;
    background: #d6d3ce;
    border-top: 1px solid #fff;
    font-family: "DejaVu Sans Condensed", "Noto Sans CJK SC", sans-serif;
    font-size: 11px;
}
.taskbar button {
    display: flex;
    align-items: center;
    gap: 1px;
    line-height: 16px;
}
.taskbar .start {
    width: 50px;
    height: 22px;
    padding-left: 3px;
    font-size: 12px;
    letter-spacing: -0.2px;
}
.start svg {
    width: 16px;
    height: 14px;
    flex: none;
}
.sep {
    width: 6px;
    height: 46px;
    border: 1px solid #848284;
    border-width: 0 1px;
    border-right-color: #fff;
    box-shadow: inset 1px 0 #fff, inset -1px 0 #848284;
    margin-left: 4px;
}
.quick {
    display: grid;
    grid-template-columns: repeat(5, 23px);
    gap: 6px 0;
    margin: 3px 0 0 6px;
}
.quick svg,
.tasks svg,
.tray-icons svg {
    width: 16px;
    height: 16px;
    flex: none;
}
.nan {
    font: bold 14px/16px "Noto Sans CJK SC", sans-serif;
    color: #f00000;
}
.more {
    width: 17px;
    margin-top: 2px;
    font: bold 15px/12px "Liberation Sans", sans-serif;
    text-align: center;
}
.tasks {
    display: flex;
    gap: 3px;
    margin-left: 2px;
}
.tasks button {
    width: 160px;
    height: 22px;
    padding-left: 4px;
    letter-spacing: -0.15px;
}
.tasks .zh {
    font-size: 12px;
}
.zh small {
    font-size: 11px;
}
.tray {
    display: flex;
    width: 130px;
    height: 38px;
    margin-left: auto;
    padding: 1px 0 0 2px;
    border: 1px solid;
    border-color: #848284 #fff #fff #848284;
}
.tray-icons {
    display: grid;
    grid-template-columns: repeat(4, 18.5px);
    gap: 2px 0;
}
.ime {
    width: 16px;
    height: 16px;
    background: #000084;
    color: #fff;
    line-height: 16px;
    text-align: center;
}
.clock {
    margin: 5px 0 0 12px;
}

.marks {
    position: absolute;
    left: 0;
    top: 0;
    width: 1024px;
    height: 768px;
    pointer-events: none;
    fill: none;
    stroke: #f00;
    stroke-width: 4.2px;
    stroke-linecap: round;
    stroke-linejoin: round;
}
```
